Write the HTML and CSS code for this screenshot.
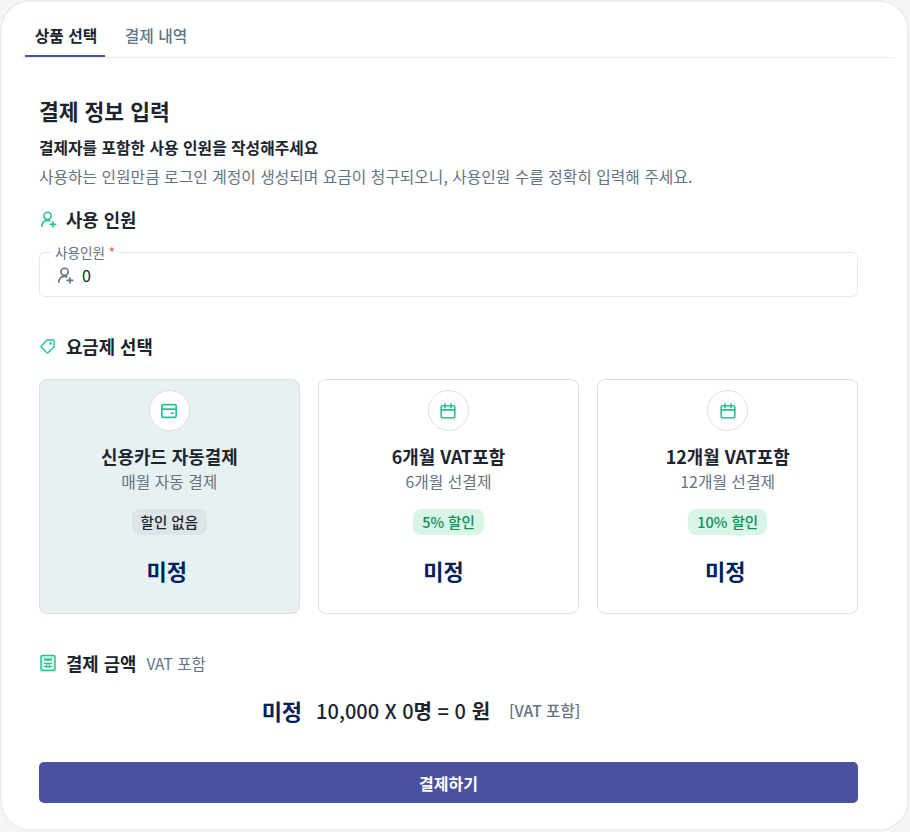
FILE: index.html
```html
<!DOCTYPE html>
<html lang="ko">
<head>
  <meta charset="UTF-8" />
  <title>결제</title>
  <link rel="stylesheet" href="styles.css">
</head>
<body>
  <div class="container">
    <div class="tabs">
      <div class="tab active">상품 선택</div>
      <div class="tab">결제 내역</div>
    </div>
    <div class="content">
      <h2>결제 정보 입력</h2>
      <p class="lead">결제자를 포함한 사용 인원을 작성해주세요</p>
      <p class="desc">사용하는 인원만큼 로그인 계정이 생성되며 요금이 청구되오니, 사용인원 수를 정확히 입력해 주세요.</p>

      <div class="section-title users-title">
        <svg class="icon" viewBox="0 0 20 20"><circle cx="9.500" cy="6.500" r="4"/><path d="M3 18c.5-3.800 3-6.500 6.500-6.500 1 0 1.800.2 2.500.5"/><path d="M15.500 13v6M12.500 16h6"/></svg>
        <span>사용 인원</span>
      </div>
      <div class="field">
        <span class="legend">사용인원 <em>*</em></span>
        <svg class="icon gray" viewBox="0 0 20 20"><circle cx="9.500" cy="6.500" r="4"/><path d="M3 18c.5-3.800 3-6.500 6.500-6.500 1 0 1.800.2 2.500.5"/><path d="M15.500 13v6M12.500 16h6"/></svg>
        <span class="value">0</span>
      </div>

      <div class="section-title plans-title">
        <svg class="icon" viewBox="0 0 24 24"><path d="M3 12 11 4h8a1 1 0 0 1 1 1v8l-8 8a1 1 0 0 1-1.400 0L3 13.400a1 1 0 0 1 0-1.400z"/><circle cx="15.500" cy="8.500" r=".8"/></svg>
        <span>요금제 선택</span>
      </div>
      <div class="plans">
        <div class="plan selected">
          <div class="plan-icon"><svg class="icon" viewBox="0 0 24 24"><rect x="2.500" y="3.500" width="19" height="17" rx="1.500"/><path d="M2.500 9.500h19M15 15h3"/></svg></div>
          <div class="plan-name">신용카드 자동결제</div>
          <div class="plan-sub">매월 자동 결제</div>
          <span class="pill none">할인 없음</span>
          <div class="price">미정</div>
        </div>
        <div class="plan">
          <div class="plan-icon"><svg class="icon" viewBox="0 0 24 24"><rect x="3" y="5" width="18" height="16" rx="1.500"/><path d="M3 10.500h18M8 2.500v5M16 2.500v5"/></svg></div>
          <div class="plan-name">6개월 VAT포함</div>
          <div class="plan-sub">6개월 선결제</div>
          <span class="pill">5% 할인</span>
          <div class="price wide">미정</div>
        </div>
        <div class="plan">
          <div class="plan-icon"><svg class="icon" viewBox="0 0 24 24"><rect x="3" y="5" width="18" height="16" rx="1.500"/><path d="M3 10.500h18M8 2.500v5M16 2.500v5"/></svg></div>
          <div class="plan-name">12개월 VAT포함</div>
          <div class="plan-sub">12개월 선결제</div>
          <span class="pill">10% 할인</span>
          <div class="price">미정</div>
        </div>
      </div>

      <div class="section-title amount-title">
        <svg class="icon calc" viewBox="0 0 18 18"><rect x="2" y="1.500" width="14" height="15" rx="1.500"/><path class="calc-bar" d="M5 5.500h8"/><path class="calc-grid" d="M5 9.500h8M5 12.500h8M7.700 9v5M10.300 9v5"/></svg>
        <span>결제 금액</span>
        <small>VAT 포함</small>
      </div>
      <div class="total">
        <span class="total-price">미정</span>
        <span class="total-calc">10,000 X 0<b>명</b> = 0 <b>원</b></span>
        <span class="total-vat">[VAT 포함]</span>
      </div>
      <button class="pay">결제하기</button>
    </div>
  </div>
</body>
</html>
```

FILE: styles.css
```css
body {
  margin: 0;
  background: #f5f5f5;
  font-family: "Noto Sans CJK KR", "Noto Sans", sans-serif;
  color: #1c2430;
}
.container {
  box-sizing: border-box;
  width: 909px;
  height: 831px;
  background: #fff;
  border: 2px solid #eeeeee;
  border-radius: 30px;
  padding: 12px 12px 0 19px;
}
.tabs {
  display: flex;
  gap: 10px;
  height: 43px;
  padding-left: 4px;
  border-bottom: 1px solid #e9ebee;
}
.tab {
  box-sizing: border-box;
  width: 80px;
  height: 43px;
  padding-left: 2px;
  line-height: 43px;
  text-align: center;
  font-size: 15.800px;
  font-weight: 500;
  color: #637381;
}
.tab.active {
  color: #1c2430;
  font-weight: 700;
  border-bottom: 2px solid #4a52a0;
}
.content {
  width: 819px;
  margin-left: 18px;
}
h2 {
  margin: 38px 0 0;
  font-size: 21.500px;
  line-height: 30px;
  font-weight: 700;
}
.lead {
  margin: 11px 0 0;
  font-size: 15.800px;
  line-height: 22px;
  font-weight: 700;
}
.desc {
  margin: 7px 0 0;
  font-size: 15.800px;
  line-height: 22px;
  color: #637381;
}
.section-title {
  display: flex;
  align-items: center;
  gap: 9px;
  height: 24px;
  font-size: 17.800px;
  font-weight: 700;
}
.section-title small {
  margin-left: 1px;
  font-size: 15.500px;
  font-weight: 400;
  color: #637381;
}
.icon {
  width: 18px;
  height: 18px;
  flex: none;
  fill: none;
  stroke: #22c58b;
  stroke-width: 1.800;
  stroke-linecap: round;
  stroke-linejoin: round;
}
.icon.gray {
  stroke: #637381;
}
.calc {
  fill: #d4f5e8;
  stroke-width: 1.500;
}
.calc-bar {
  stroke-width: 2;
  stroke-linecap: butt;
}
.calc-grid {
  stroke-width: 1;
  stroke-linecap: butt;
}
.users-title {
  margin-top: 19px;
}
.field {
  position: relative;
  box-sizing: border-box;
  display: flex;
  align-items: center;
  gap: 8px;
  height: 45px;
  margin-top: 21px;
  padding: 0 16px;
  border: 1px solid #e6e9ed;
  border-radius: 6px;
}
.legend {
  position: absolute;
  top: -9px;
  left: 11px;
  padding: 0 4px;
  background: #fff;
  font-size: 13.600px;
  line-height: 17px;
  color: #637381;
}
.legend em {
  color: #ff5630;
  font-style: normal;
}
.value {
  font-size: 16px;
}
.plans-title {
  margin-top: 37px;
}
.plans {
  display: grid;
  grid-template-columns: repeat(3, 1fr);
  gap: 18.500px;
  margin-top: 21px;
}
.plan {
  box-sizing: border-box;
  height: 235px;
  display: flex;
  flex-direction: column;
  align-items: center;
  padding-top: 10px;
  border: 1px solid #dcdfe3;
  border-radius: 8px;
}
.plan.selected {
  background: #e8f1f2;
}
.plan-icon {
  box-sizing: border-box;
  width: 41px;
  height: 41px;
  display: flex;
  align-items: center;
  justify-content: center;
  background: #fff;
  border: 1px solid #dcdfe3;
  border-radius: 50%;
}
.plan-icon .icon {
  stroke-width: 2.200;
}
.plan-name {
  margin-top: 13px;
  font-size: 17.900px;
  line-height: 24px;
  font-weight: 700;
}
.plan-sub {
  margin-top: 3px;
  font-size: 15.800px;
  line-height: 22px;
  color: #637381;
}
.pill {
  margin-top: 16px;
  height: 26px;
  padding: 0 9px;
  line-height: 26px;
  border-radius: 8px;
  font-size: 14.500px;
  font-weight: 500;
  color: #118d57;
  background: #d8f5e5;
}
.pill.none {
  color: #1c2430;
  background: #dde5e8;
}
.price {
  margin-top: 20px;
  padding-right: 5px;
  font-size: 22px;
  line-height: 30px;
  font-weight: 700;
  color: #002060;
}
.price.wide {
  padding-right: 10px;
}
.amount-title {
  margin-top: 37px;
}
.total {
  display: flex;
  align-items: center;
  justify-content: center;
  height: 30px;
  margin-top: 20px;
  padding-right: 55px;
}
.total-price {
  font-size: 22px;
  font-weight: 700;
  color: #002060;
}
.total-calc {
  margin-left: 14px;
  font-size: 20px;
  font-weight: 500;
}
.total-calc b {
  font-weight: 700;
}
.total-vat {
  margin-left: 19px;
  font-size: 15.600px;
  font-weight: 500;
  color: #637381;
}
.pay {
  display: block;
  width: 100%;
  height: 41px;
  margin-top: 37px;
  border: 0;
  border-radius: 5px;
  background: #4a52a0;
  color: #fff;
  font-family: inherit;
  font-size: 16px;
  font-weight: 700;
}
```
